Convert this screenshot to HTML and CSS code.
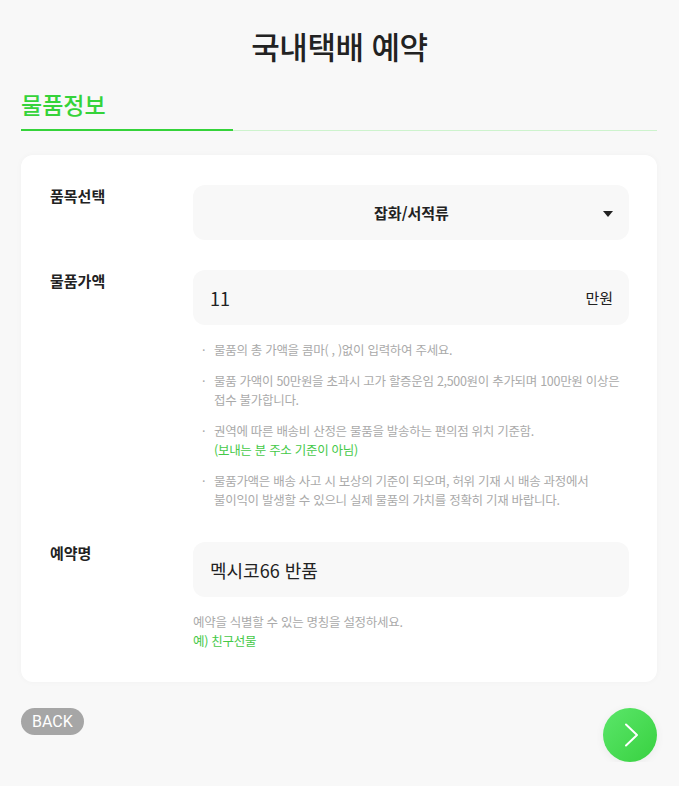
FILE: index.html
```html
<!DOCTYPE html>
<html lang="ko">
  <head>
    <meta charset="UTF-8" />
    <meta name="viewport" content="width=device-width, initial-scale=1.0" />
    <title>국내택배 예약</title>
    <link rel="stylesheet" href="styles.css">
  </head>

  <body>
    <header>
      <h1>국내택배 예약</h1>
    </header>

    <main>
      <section class="tab">
        <h2>물품정보</h2>
        <div class="tab-line"><span class="tab-fill"></span></div>
      </section>

      <section class="card">
        <div class="row">
          <p class="label">품목선택</p>
          <div class="field">
            <div class="box select">
              <span class="select-value">잡화/서적류</span>
              <span class="caret"></span>
            </div>
          </div>
        </div>

        <div class="row">
          <p class="label">물품가액</p>
          <div class="field">
            <div class="box">
              <span class="value">11</span>
              <span class="unit">만원</span>
            </div>
            <ul class="notes">
              <li>물품의 총 가액을 콤마( , )없이 입력하여 주세요.</li>
              <li>물품 가액이 50만원을 초과시 고가 할증운임 2,500원이 추가되며 100만원 이상은 접수 불가합니다.</li>
              <li>권역에 따른 배송비 산정은 물품을 발송하는 편의점 위치 기준함.<br><span class="green">(보내는 분 주소 기준이 아님)</span></li>
              <li>물품가액은 배송 사고 시 보상의 기준이 되오며, 허위 기재 시 배송 과정에서<br>불이익이 발생할 수 있으니 실제 물품의 가치를 정확히 기재 바랍니다.</li>
            </ul>
          </div>
        </div>

        <div class="row">
          <p class="label">예약명</p>
          <div class="field">
            <div class="box">
              <span class="value">멕시코66 반품</span>
            </div>
            <p class="help">예약을 식별할 수 있는 명칭을 설정하세요.<br><span class="green">예) 친구선물</span></p>
          </div>
        </div>
      </section>

      <nav class="actions">
        <button class="back">BACK</button>
        <button class="next">
          <svg width="16" height="24" viewBox="0 0 16 24">
            <path d="M2 1.5 L13 12 L2 22.5" fill="none" stroke="#fff" stroke-width="2" stroke-linecap="round" stroke-linejoin="round" />
          </svg>
        </button>
      </nav>
    </main>
  </body>
</html>
```

FILE: styles.css
```css
html,
body {
  margin: 0;
  padding: 0;
}

body {
  background: #f8f8f8;
  font-family: "Noto Sans CJK KR", "Noto Sans", sans-serif;
  color: #222;
}

header {
  display: flex;
  justify-content: center;
  padding-top: 24px;
}

header h1 {
  margin: 0;
  font-size: 31px;
  font-weight: 500;
  line-height: 44px;
  letter-spacing: -0.5px;
}

main {
  padding: 0 22px 0 21px;
}

.tab h2 {
  margin: 20px 0 0;
  font-size: 23px;
  font-weight: 500;
  line-height: 32px;
  color: #35d33a;
}

.tab-line {
  margin-top: 10px;
  height: 1px;
  background: #cdf3cd;
  display: flex;
}

.tab-fill {
  width: 212px;
  height: 2px;
  margin-top: -1px;
  background: #35d33a;
}

.card {
  margin-top: 24px;
  background: #fff;
  border-radius: 12px;
  padding: 30px 28px 32px 29px;
  box-shadow: 0 0 6px rgba(0, 0, 0, 0.03);
}

.row {
  display: flex;
  margin-bottom: 30px;
}

.row:last-child {
  margin-bottom: 0;
}

.label {
  width: 143px;
  flex-shrink: 0;
  margin: 0;
  padding-top: 0;
  font-size: 15px;
  font-weight: 700;
  line-height: 22px;
}

.field {
  flex-grow: 1;
}

.box {
  height: 55px;
  background: #f8f8f8;
  border-radius: 12px;
  display: flex;
  align-items: center;
  padding: 0 16px 0 17px;
}

.select {
  position: relative;
  justify-content: center;
}

.select-value {
  font-size: 15px;
  font-weight: 700;
}

.caret {
  position: absolute;
  right: 16px;
  top: 26px;
  border-left: 5px solid transparent;
  border-right: 5px solid transparent;
  border-top: 6px solid #222;
}

.value {
  flex-grow: 1;
  font-size: 18px;
  font-weight: 400;
  color: #222;
}

.unit {
  font-size: 15px;
}

.notes {
  list-style: none;
  margin: 15px 0 3px;
  padding: 0 0 0 21px;
  font-size: 12.5px;
  line-height: 19px;
  color: #aaa;
  letter-spacing: -0.3px;
}

.notes li {
  position: relative;
  margin-bottom: 12px;
}

.notes li:last-child {
  margin-bottom: 0;
}

.notes li::before {
  content: "·";
  position: absolute;
  left: -12px;
}

.green {
  color: #45c948;
}

.help {
  margin: 15px 0 0;
  font-size: 12.5px;
  line-height: 19px;
  color: #aaa;
  letter-spacing: -0.3px;
}

.actions {
  display: flex;
  justify-content: space-between;
  align-items: flex-start;
  margin-top: 26px;
}

.back {
  border: none;
  background: #a6a6a6;
  color: #fff;
  font-family: Roboto, "Liberation Sans", sans-serif;
  font-size: 16px;
  height: 27px;
  padding: 0 11px;
  border-radius: 14px;
  cursor: pointer;
}

.next {
  border: none;
  width: 54px;
  height: 54px;
  border-radius: 50%;
  background: linear-gradient(135deg, #5be66a, #38d140);
  box-shadow: 0 2px 10px rgba(0, 0, 0, 0.06);
  display: flex;
  align-items: center;
  justify-content: center;
  padding: 0 0 0 4px;
  cursor: pointer;
}
```
